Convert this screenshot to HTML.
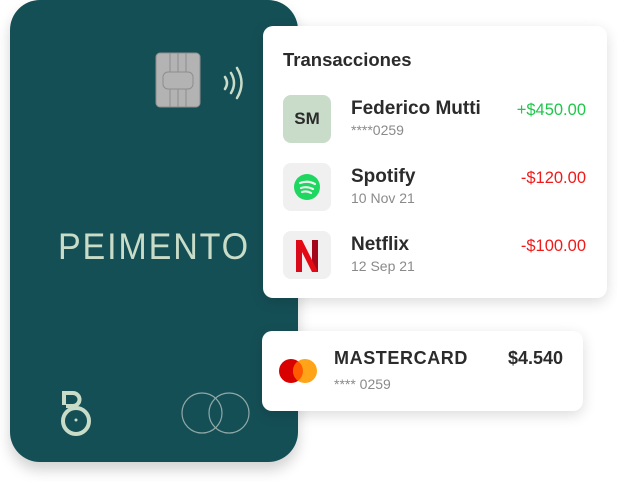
<!DOCTYPE html>
<html><head><style>
*{margin:0;padding:0;box-sizing:border-box}
body{width:617px;height:482px;background:#fff;position:relative;overflow:hidden;font-family:"Liberation Sans",sans-serif}
.card{position:absolute;left:10px;top:0;width:288px;height:462px;background:#154f56;border-radius:30px;box-shadow:0 8px 14px rgba(0,0,0,.18)}
.panel{position:absolute;background:#fff;border-radius:10px;box-shadow:0 4px 14px rgba(0,0,0,.14)}
.ic{position:absolute;left:20px;width:48px;height:48px;border-radius:8px;background:#f0f0f0}
.nm{position:absolute;left:88px;font-weight:bold;font-size:19px;color:#2b2b2b}
.sb{position:absolute;left:88px;font-size:14px;color:#8a8a8a}
.am{position:absolute;right:21px;font-size:16.5px}
</style></head><body>
<div class="card">
 <svg width="288" height="462" style="position:absolute;left:0;top:0">
  <rect x="146" y="53" width="44" height="54" rx="4" fill="#b3b3b3" stroke="#8e8e8e"/>
  <g stroke="#8e8e8e" fill="none" stroke-width="1">
   <line x1="160" y1="53" x2="160" y2="72"/><line x1="168" y1="53" x2="168" y2="72"/><line x1="176" y1="53" x2="176" y2="72"/>
   <line x1="160" y1="89" x2="160" y2="107"/><line x1="168" y1="89" x2="168" y2="107"/><line x1="176" y1="89" x2="176" y2="107"/>
   <rect x="153" y="72" width="30" height="17" rx="5"/>
  </g>
  <g stroke="#c9dcc8" stroke-width="2.5" fill="none" stroke-linecap="round">
   <path d="M215 77 q4 6 0 12"/><path d="M221 73 q6 10 0 20"/><path d="M227 68 q9 15 0 30"/>
  </g>
  <text x="48" y="259" fill="#c9dcc8" font-size="37" font-family="Liberation Sans" letter-spacing="2" textLength="192" lengthAdjust="spacingAndGlyphs">PEIMENTO</text>
  <g stroke="#c9dcc8" stroke-width="4" fill="none">
   <path d="M54 405 v-12 h9 a6.5 6.5 0 0 1 0 13 h-7"/>
   <circle cx="66" cy="421" r="13"/>
  </g>
  <circle cx="66" cy="420" r="1.5" fill="#c9dcc8"/>
  <g stroke="#8fa9a8" stroke-width="1.2" fill="none">
   <circle cx="192" cy="413" r="20"/><circle cx="219" cy="413" r="20"/>
  </g>
 </svg>
</div>
<div class="panel" style="left:263px;top:26px;width:344px;height:272px">
 <div style="position:absolute;left:20px;top:23px;font-weight:bold;font-size:18.5px;color:#2b2b2b">Transacciones</div>
 <div class="ic" style="top:69px;background:#c8dcc9;text-align:center;line-height:48px;font-weight:bold;font-size:17px;color:#2b2b2b">SM</div>
 <div class="nm" style="top:72px">Federico Mutti</div>
 <div class="sb" style="top:96px">****0259</div>
 <div class="am" style="top:75px;color:#1fc74b">+$450.00</div>
 <div class="ic" style="top:137px"><svg width="48" height="48"><circle cx="24" cy="24" r="13" fill="#1ed760"/><g stroke="#f0f0f0" stroke-width="2.2" fill="none" stroke-linecap="round"><path d="M17 20 q8 -3 15 1"/><path d="M18 25 q6 -2 12 1"/><path d="M19 29 q5 -1.5 9 1"/></g></svg></div>
 <div class="nm" style="top:140px">Spotify</div>
 <div class="sb" style="top:164px">10 Nov 21</div>
 <div class="am" style="top:143px;color:#f01a1a">-$120.00</div>
 <div class="ic" style="top:205px"><svg width="48" height="48"><path d="M13 9h6v32h-6z" fill="#d80a1c"/><path d="M29 9h6v32h-6z" fill="#a5071a"/><path d="M13 9h6l16 32h-6z" fill="#e50914"/></svg></div>
 <div class="nm" style="top:208px">Netflix</div>
 <div class="sb" style="top:232px">12 Sep 21</div>
 <div class="am" style="top:211px;color:#f01a1a">-$100.00</div>
</div>
<div class="panel" style="left:262px;top:331px;width:321px;height:80px">
 <svg width="50" height="40" style="position:absolute;left:14px;top:20px"><circle cx="15" cy="20" r="12" fill="#d90000"/><circle cx="29" cy="20" r="12" fill="#ff9a00" fill-opacity=".9"/><path d="M22 10.3 a12 12 0 0 1 0 19.4 a12 12 0 0 1 0 -19.4z" fill="#ff5a00"/></svg>
 <div style="position:absolute;left:72px;top:17px;font-weight:bold;font-size:18px;color:#2b2b2b;letter-spacing:.6px">MASTERCARD</div>
 <div style="position:absolute;left:72px;top:45px;font-size:14px;color:#8a8a8a">**** 0259</div>
 <div style="position:absolute;right:20px;top:17px;font-weight:bold;font-size:18px;color:#2b2b2b">$4.540</div>
</div>
</body></html>
